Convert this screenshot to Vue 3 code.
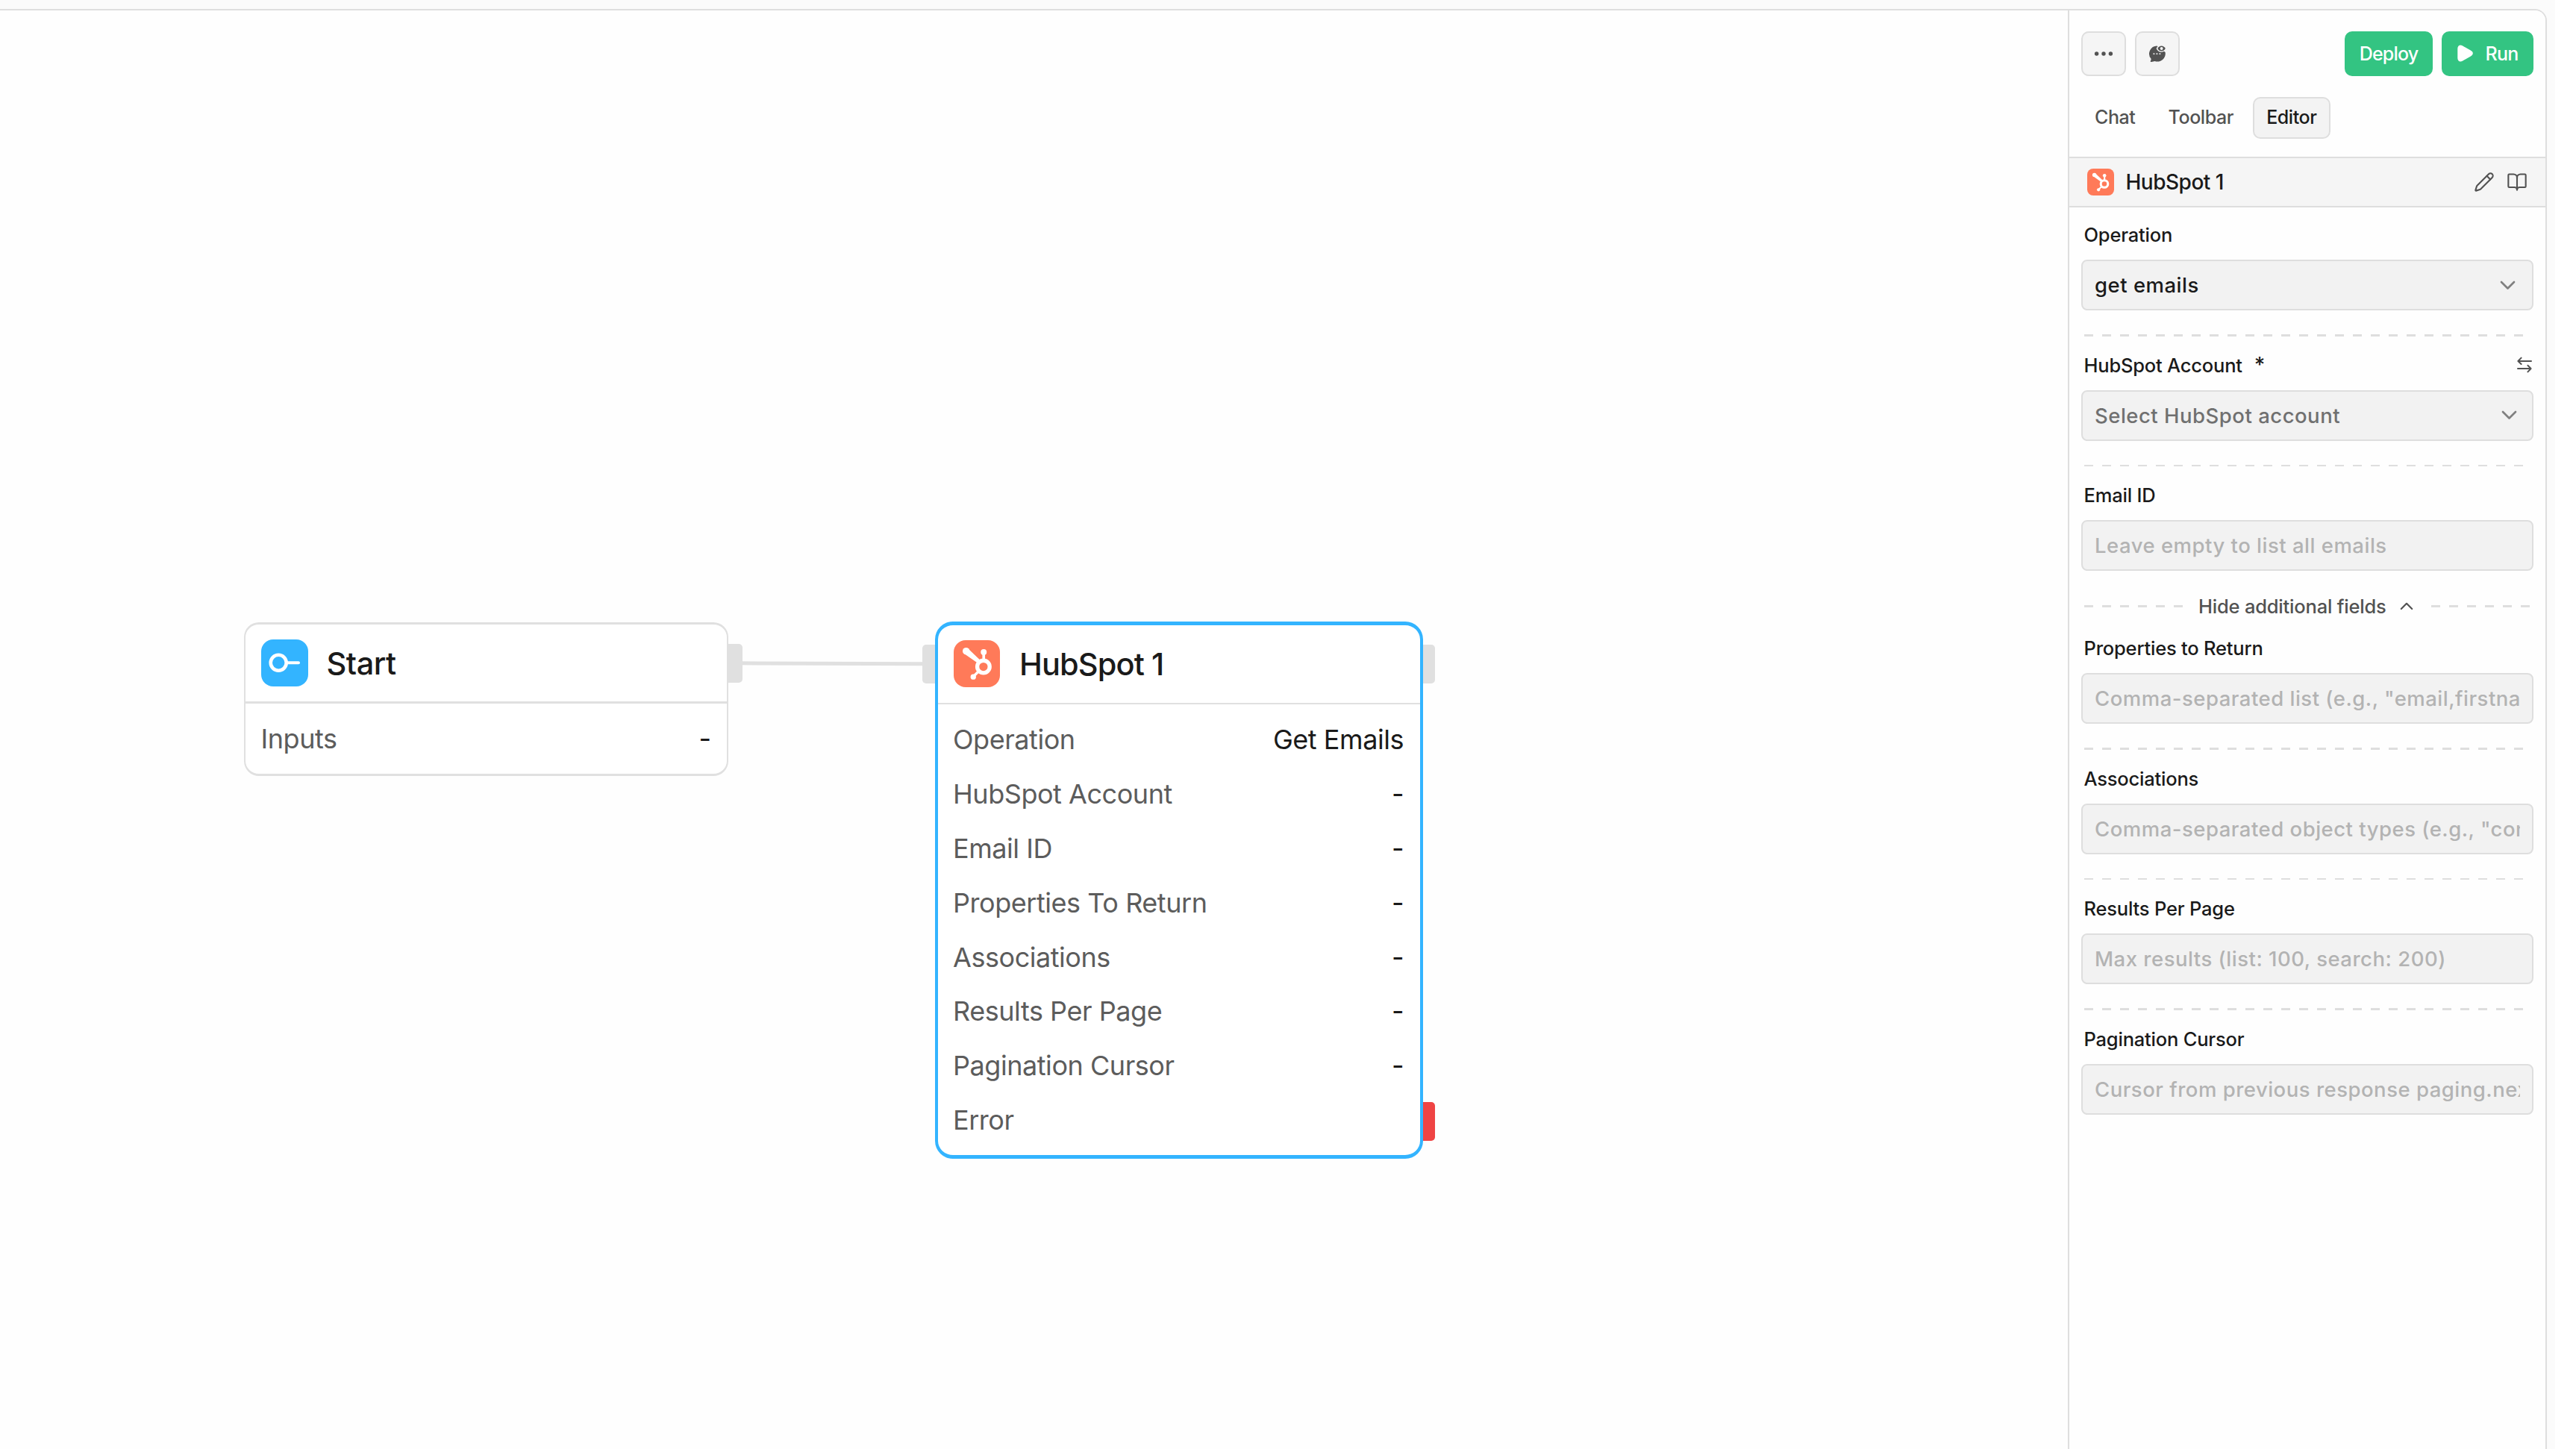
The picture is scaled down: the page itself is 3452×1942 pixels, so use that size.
<template>
  <div class="app-shell">
    <main class="workspace">
      <section class="canvas">
        <svg class="edge" width="246" height="10" viewBox="0 0 246 10">
          <path d="M0 4.8 C80 4.8 160 5.8 246 5.8" fill="none" stroke="#e0e0e0" stroke-width="5" />
        </svg>

        <div class="node start-node">
          <span class="handle right"></span>
          <div class="node-card">
            <div class="node-header">
              <span class="node-icon start-icon">
                <svg width="62" height="62" viewBox="0 0 62 62" fill="none" stroke="#fff" stroke-linecap="round">
                  <circle cx="23.2" cy="31.2" r="10.5" stroke-width="4.6" />
                  <path d="M35.5 31.2H50" stroke-width="4" />
                </svg>
              </span>
              <span class="node-title">Start</span>
            </div>
            <div class="node-body">
              <div class="node-row">
                <span class="row-label">Inputs</span>
                <span class="row-value">-</span>
              </div>
            </div>
          </div>
        </div>

        <div class="node hubspot-node">
          <span class="handle left"></span>
          <span class="handle right"></span>
          <span class="handle right error"></span>
          <div class="node-card">
            <div class="node-header">
              <span class="node-icon hubspot-icon">
                <svg viewBox="0 0 188 188">
                  <g fill="#fff" stroke="#fff">
                    <circle cx="120" cy="107" r="25" fill="none" stroke-width="16" />
                    <path d="M121 49V78" stroke-width="11" />
                    <path d="M102 124L80 146" stroke-width="10" />
                    <path d="M58 34L106 80L95 91L42 54Z" stroke="none" />
                    <circle cx="121" cy="48" r="12" stroke="none" />
                    <circle cx="50" cy="44" r="14" stroke="none" />
                    <circle cx="79" cy="148" r="11" stroke="none" />
                  </g>
                </svg>
              </span>
              <span class="node-title">HubSpot 1</span>
            </div>
            <div class="node-body">
              <div class="node-row" v-for="row in hubspotRows" :key="row.label">
                <span class="row-label">{{ row.label }}</span>
                <span class="row-value">{{ row.value }}</span>
              </div>
            </div>
          </div>
        </div>
      </section>

      <aside class="panel">
        <div class="panel-actions">
          <button class="icon-btn">
            <svg width="26" height="8" viewBox="0 0 26 8" fill="#525252">
              <circle cx="3.6" cy="4" r="2.7" />
              <circle cx="13" cy="4" r="2.7" />
              <circle cx="22.4" cy="4" r="2.7" />
            </svg>
          </button>
          <button class="icon-btn">
            <svg width="24" height="24" viewBox="0 0 24 24">
              <path d="M11.5 1.4A10.6 10.6 0 0 0 3.4 18.6C3.8 19.6 3.4 20.8 2.8 21.8C2.4 22.8 3 23.2 4 23L8.6 22A10.7 10.7 0 0 0 22.6 10Z" fill="#525252" />
              <path d="M10.6 5C13 -1.4 21.4 -1.4 24 5C21.4 11.4 13 11.4 10.6 5Z" fill="#f5f5f5" />
              <path d="M12.4 5C14.4 .2 20.6 .2 22.8 5C20.6 9.8 14.4 9.8 12.4 5Z" fill="#525252" />
              <circle cx="17.6" cy="5" r="2" fill="#f5f5f5" />
              <g fill="#d4d4d4">
                <circle cx="7.4" cy="12.2" r="1.1" />
                <circle cx="11.4" cy="12.2" r="1.1" />
                <circle cx="15.4" cy="12.2" r="1.1" />
              </g>
            </svg>
          </button>
          <button class="green-btn deploy">Deploy</button>
          <button class="green-btn run">
            <svg width="21" height="23" viewBox="0 0 21 23">
              <path d="M0.3 5.2C0.3 1.2 3.4 -0.6 6.8 1.2L17.8 7.6C21.8 9.8 21.8 13.2 17.8 15.4L6.8 21.8C3.4 23.6 0.3 21.8 0.3 17.8Z" fill="#fff" />
            </svg>
            <span>Run</span>
          </button>
        </div>

        <nav class="tabs">
          <button class="tab" v-for="tab in tabs" :key="tab" :class="{ active: tab === activeTab }" @click="activeTab = tab">
            {{ tab }}
          </button>
        </nav>

        <div class="block-bar">
          <span class="block-icon hubspot-icon">
            <svg viewBox="0 0 188 188">
              <g fill="#fff" stroke="#fff">
                <circle cx="120" cy="107" r="25" fill="none" stroke-width="16" />
                <path d="M121 49V78" stroke-width="11" />
                <path d="M102 124L80 146" stroke-width="10" />
                <path d="M58 34L106 80L95 91L42 54Z" stroke="none" />
                <circle cx="121" cy="48" r="12" stroke="none" />
                <circle cx="50" cy="44" r="14" stroke="none" />
                <circle cx="79" cy="148" r="11" stroke="none" />
              </g>
            </svg>
          </span>
          <span class="block-name">HubSpot 1</span>
          <svg class="bar-icon" width="28" height="28" viewBox="0 0 24 24">
            <path d="M21.17 6.81a1 1 0 0 0-3.98-3.98L3.84 16.17a2 2 0 0 0-.5.83l-1.32 4.35a.5.5 0 0 0 .62.62l4.35-1.32a2 2 0 0 0 .83-.5z" />
            <path d="M15 5l4 4" />
          </svg>
          <svg class="bar-icon" width="28" height="28" viewBox="0 0 24 24">
            <path d="M12 7v14" />
            <path d="M3 18a1 1 0 0 1-1-1V4a1 1 0 0 1 1-1h5a4 4 0 0 1 4 4 4 4 0 0 1 4-4h5a1 1 0 0 1 1 1v13a1 1 0 0 1-1 1h-6a3 3 0 0 0-3 3 3 3 0 0 0-3-3z" />
          </svg>
        </div>

        <div class="fields">
          <template v-for="(field, idx) in fields" :key="field.label">
            <div class="extra-toggle" v-if="field.extraStart">
              <span class="dashes"></span>
              <span class="toggle-text">Hide additional fields</span>
              <svg width="18" height="11" viewBox="0 0 18 11" fill="none" stroke="#525252" stroke-width="2.2" stroke-linecap="round" stroke-linejoin="round">
                <path d="M1.8 9L9 1.8L16.2 9" />
              </svg>
              <span class="dashes"></span>
            </div>
            <div class="divider" v-else-if="idx > 0"></div>

            <div class="field">
              <div class="field-head">
                <span class="field-label">{{ field.label }}</span>
                <span class="required" v-if="field.required">*</span>
                <svg v-if="field.swap" class="swap" width="20" height="22" viewBox="0 0 20 22" fill="none" stroke="#525252" stroke-width="2" stroke-linecap="round" stroke-linejoin="round">
                  <path d="M19 6H1.4M5.6 1.6L1.4 6L5.6 10" />
                  <path d="M1 16H18.6M14.4 11.8L18.6 16L14.4 20.4" />
                </svg>
              </div>
              <div class="field-box" :class="field.kind">
                <span class="box-text">{{ field.text }}</span>
                <svg v-if="field.chevron" class="chevron" width="21" height="13" viewBox="0 0 21 13" fill="none" stroke="#808080" stroke-width="2.7" stroke-linecap="round" stroke-linejoin="round">
                  <path d="M2 2L10.5 10.5L19 2" />
                </svg>
              </div>
            </div>
          </template>
        </div>
      </aside>
    </main>
  </div>
</template>

<script setup>
import { ref } from 'vue'

const tabs = ['Chat', 'Toolbar', 'Editor']
const activeTab = ref('Editor')

const hubspotRows = [
  { label: 'Operation', value: 'Get Emails' },
  { label: 'HubSpot Account', value: '-' },
  { label: 'Email ID', value: '-' },
  { label: 'Properties To Return', value: '-' },
  { label: 'Associations', value: '-' },
  { label: 'Results Per Page', value: '-' },
  { label: 'Pagination Cursor', value: '-' },
  { label: 'Error', value: '' }
]

const fields = [
  { label: 'Operation', text: 'get emails', kind: 'filled', chevron: true },
  { label: 'HubSpot Account', text: 'Select HubSpot account', kind: 'select', chevron: true, required: true, swap: true },
  { label: 'Email ID', text: 'Leave empty to list all emails', kind: 'empty' },
  { label: 'Properties to Return', text: 'Comma-separated list (e.g., "email,firstna', kind: 'empty', extraStart: true },
  { label: 'Associations', text: 'Comma-separated object types (e.g., "con', kind: 'empty' },
  { label: 'Results Per Page', text: 'Max results (list: 100, search: 200)', kind: 'empty' },
  { label: 'Pagination Cursor', text: 'Cursor from previous response paging.nex', kind: 'empty' }
]
</script>

<style>
body {
  margin: 0;
  background: #fff;
}
</style>

<style scoped>
.app-shell {
  box-sizing: border-box;
  width: 3424px;
  height: 1942px;
  padding: 12px 11px 0 0;
  overflow: hidden;
  background: #fbfbfb;
  font-family: Inter, 'Liberation Sans', sans-serif;
  color: #1a1a1a;
}

.workspace {
  box-sizing: border-box;
  display: flex;
  height: 1960px;
  border: 2px solid #dedede;
  border-left: none;
  border-top-right-radius: 16px;
  background: #fefefe;
  overflow: hidden;
}

.canvas {
  position: relative;
  flex: 1;
}

/* nodes and edge sit at free canvas positions */
.edge {
  position: absolute;
  left: 992px;
  top: 870px;
}

.node {
  position: absolute;
}

.start-node {
  left: 327px;
  top: 820px;
  width: 649px;
}

.hubspot-node {
  left: 1252.5px;
  top: 819px;
  width: 654px;
}

.node-card {
  position: relative;
  box-sizing: border-box;
  border: solid #e0e0e0;
  border-width: 3px 2px;
  border-radius: 20px;
  background: #fff;
}

.hubspot-node .node-card {
  border-color: #33b4ff;
  border-width: 5px 4px;
  border-radius: 24px;
}

.node-header {
  box-sizing: border-box;
  display: flex;
  align-items: center;
  height: 106px;
  padding: 0 21px;
  border-bottom: 3px solid #e0e0e0;
}

.hubspot-node .node-header {
  padding-bottom: 1px;
  border-bottom-width: 2px;
}

.node-icon {
  display: flex;
  width: 62.5px;
  height: 62.5px;
  border-radius: 16px;
}

.start-icon {
  background: #33b4ff;
}

.hubspot-icon {
  background: #ff7a59;
}

.node-title {
  margin-left: 26px;
  font-size: 41.5px;
  font-weight: 500;
  letter-spacing: -0.9px;
}

.start-node .node-title {
  margin-left: 25px;
  letter-spacing: -0.5px;
}

.node-body {
  padding: 11px 21.5px 10.2px 20.5px;
}

.node-row {
  display: flex;
  align-items: center;
  justify-content: space-between;
  height: 72.8px;
  font-size: 36px;
  letter-spacing: -0.45px;
}

.row-label {
  color: #5c5c5c;
}

.handle {
  position: absolute;
  top: 29px;
  width: 17px;
  height: 52px;
  background: #e0e0e0;
}

.hubspot-node .handle {
  top: 31px;
}

.handle.right {
  left: 100%;
  width: 19px;
  border-radius: 0 5px 5px 0;
}

.hubspot-node .handle.right {
  width: 16.5px;
}

.handle.left {
  right: 100%;
  border-radius: 5px 0 0 5px;
}

.hubspot-node .handle.error {
  top: 644px;
  background: #ef4444;
}

.panel {
  box-sizing: border-box;
  width: 640px;
  border-left: 2px solid #dedede;
  background: #fefefe;
}

.panel-actions {
  display: flex;
  gap: 12px;
  padding: 28px 16px 0;
}

button {
  font-family: inherit;
  padding: 0;
}

.icon-btn {
  box-sizing: border-box;
  display: flex;
  align-items: center;
  justify-content: center;
  width: 60px;
  height: 60px;
  border: 2px solid #dedede;
  border-radius: 10px;
  background: #f5f5f5;
}

.green-btn {
  box-sizing: border-box;
  display: flex;
  align-items: center;
  justify-content: center;
  height: 60px;
  padding-bottom: 1px;
  border: none;
  border-radius: 10px;
  background: #33c482;
  color: #fff;
  font-size: 25px;
  font-weight: 500;
  letter-spacing: -0.8px;
}

.deploy {
  width: 118px;
  margin-left: auto;
}

.run {
  width: 123px;
  gap: 17px;
}

.tabs {
  display: flex;
  gap: 8px;
  padding: 28px 16px 24px;
}

.tab {
  box-sizing: border-box;
  height: 56px;
  padding: 0 16px 2px;
  border: 2px solid transparent;
  border-radius: 10px;
  background: none;
  color: #525252;
  font-size: 25px;
  font-weight: 500;
  letter-spacing: -0.4px;
}

.tab.active {
  border-color: #dedede;
  background: #f3f3f3;
  color: #1a1a1a;
}

.block-bar {
  box-sizing: border-box;
  display: flex;
  align-items: center;
  height: 68px;
  padding: 0 24px;
  border-top: 2px solid #dedede;
  border-bottom: 2px solid #dedede;
  background: #f5f5f5;
}

.block-icon {
  display: flex;
  width: 36px;
  height: 36px;
  border-radius: 8px;
}

.block-name {
  flex: 1;
  margin-left: 15.5px;
  font-size: 28px;
  font-weight: 500;
  letter-spacing: -0.5px;
}

.bar-icon {
  fill: none;
  stroke: #525252;
  stroke-width: 1.8;
  stroke-linecap: round;
  stroke-linejoin: round;
}

.bar-icon + .bar-icon {
  margin-left: 16px;
}

.fields {
  padding: 22px 16px 0;
}

.field-head {
  box-sizing: border-box;
  display: flex;
  align-items: center;
  height: 30px;
  margin-bottom: 18px;
  padding: 0 2px 1px 3.5px;
  font-size: 25.5px;
  font-weight: 500;
  letter-spacing: -0.2px;
}

.required {
  margin-left: 16px;
  font-size: 28px;
}

.swap {
  margin-left: auto;
}

.field-box {
  box-sizing: border-box;
  display: flex;
  align-items: center;
  height: 68px;
  padding: 0 16px;
  border: 2px solid #dedede;
  border-radius: 8px;
  background: #f2f2f2;
  font-size: 27.5px;
  font-weight: 450;
  letter-spacing: 0.5px;
}

.box-text {
  flex: 1;
  overflow: hidden;
  white-space: nowrap;
  line-height: 40px;
}

.field-box.select {
  color: #707070;
}

.field-box.empty {
  color: #b3b3b3;
}

.chevron {
  margin-right: 4px;
}

.filled .chevron {
  margin-right: 6px;
}

.divider,
.dashes {
  height: 2.5px;
  background: repeating-linear-gradient(90deg, #dedede 0 12px, transparent 12px 24px);
}

.divider {
  margin: 32px 10px 24px 4px;
}

.extra-toggle {
  display: flex;
  align-items: center;
  height: 30px;
  margin: 32px 4px 27px;
  color: #525252;
  font-size: 25.5px;
  font-weight: 500;
  letter-spacing: -0.2px;
}

.dashes {
  width: 133px;
  height: 3px;
}

.toggle-text {
  margin-left: 20px;
}

.extra-toggle svg {
  margin: 0 auto 0 18px;
}
</style>
